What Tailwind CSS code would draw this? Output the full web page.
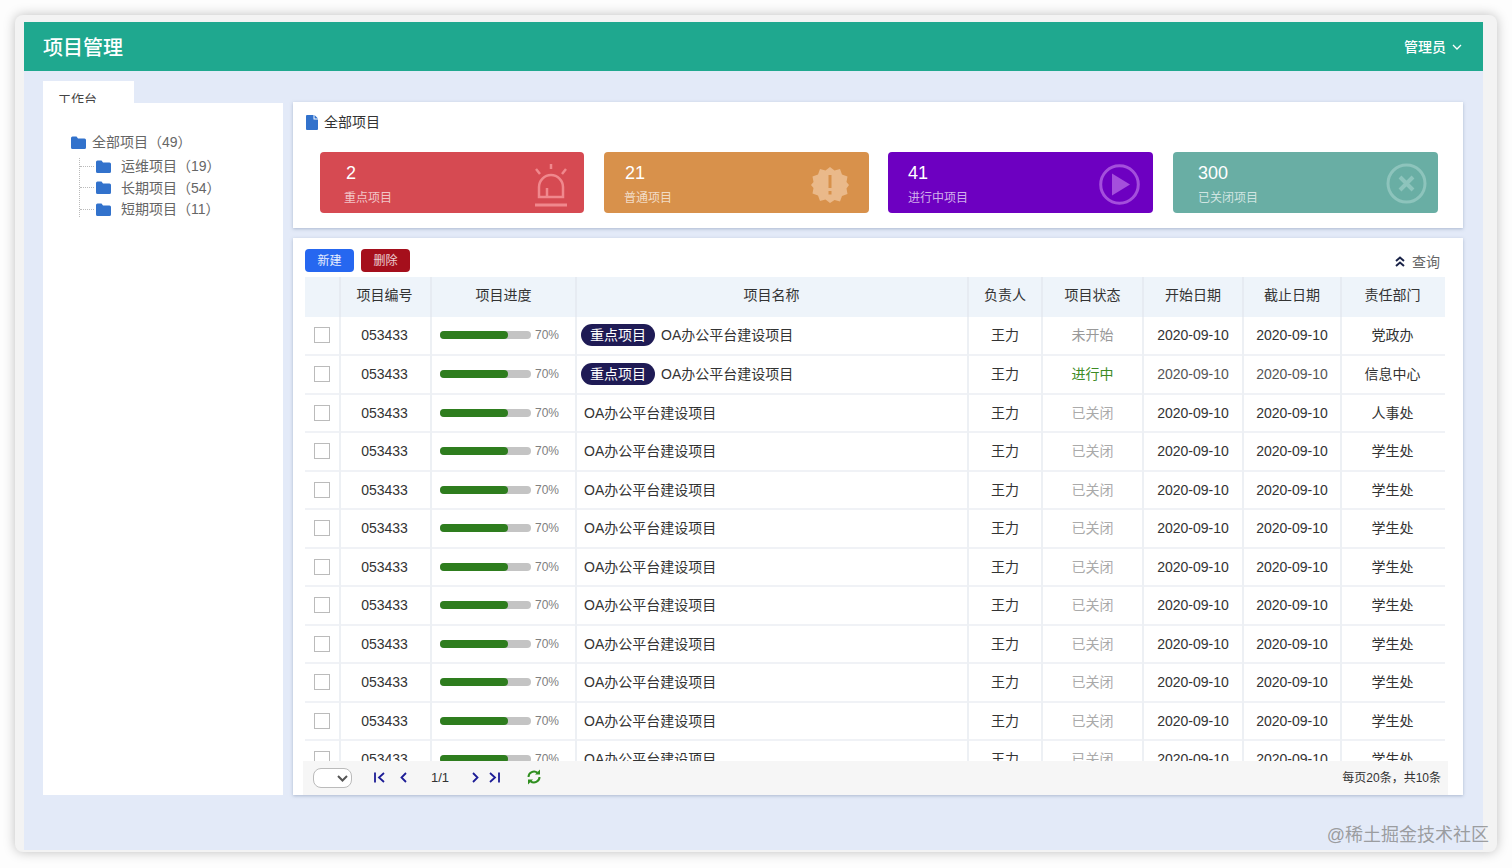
<!DOCTYPE html>
<html lang="zh-CN">
<head>
    <meta charset="UTF-8">
    <title>项目管理</title>
    <script src="https://cdn.jsdelivr.net/npm/@tailwindcss/browser@4"></script>
</head>
<body class="w-[1512px] h-[868px] overflow-hidden bg-[#fdfdfd] text-[#333] font-['Liberation_Sans','Noto_Sans_CJK_SC',sans-serif]">
    <div class="relative ml-[15px] mt-[15px] w-[1482px] h-[837px] pl-[9px] pt-[7px] pr-[14px] pb-[2px] bg-[#f3f3f3] rounded-lg shadow-[0_0_12px_rgba(0,0,0,0.25)]">
        <div class="w-[1459px] h-full flex flex-col bg-[#e3eaf8]">
            <!-- header -->
            <header class="h-[49px] flex items-center justify-between pl-[19px] pr-[21px] bg-[#1fa88f] text-white">
                <h1 class="pt-[3px] text-xl font-medium">项目管理</h1>
                <div class="flex items-center gap-[6px] text-sm font-medium">
                    管理员
                    <svg width="10" height="6" viewBox="0 0 10 6" fill="none" stroke="currentColor" stroke-width="1.3"><path d="M1 1l4 4 4-4"/></svg>
                </div>
            </header>

            <main class="flex flex-1 pl-[19px] pr-[20px]">
                <!-- tree -->
                <aside class="w-[240px] mr-[10px] pt-[10px] flex flex-col">
                    <div class="w-[91px] h-[22px] pl-[15px] pt-[10px] bg-white overflow-hidden text-[13px] leading-[18px] text-[#444]">工作台</div>
                    <div class="h-[692px] bg-white pl-[28px] pt-[29px] text-sm text-[#666]">
                        <div class="flex items-center h-[20px] gap-[6px]">
                            <svg width="15" height="13" viewBox="0 0 15 13" fill="#3272cc"><path d="M0 2a1.500 1.500 0 011.500-1.500h4L7 2.500h6.500A1.500 1.500 0 0115 4v7.500a1.500 1.500 0 01-1.500 1.500h-12A1.500 1.500 0 010 11.500z"/></svg>
                            全部项目（49）
                        </div>
                        <div class="relative ml-[8px] mt-[6px] pl-[16px] flex flex-col gap-[5.5px] border-l border-dotted border-[#bbb]">
                            <div class="flex items-center h-[16px] gap-[10px]">
                                <span class="absolute left-0 w-[14px] border-t border-dotted border-[#bbb]"></span>
                                <svg width="15" height="13" viewBox="0 0 15 13" fill="#3272cc"><path d="M0 2a1.500 1.500 0 011.500-1.500h4L7 2.500h6.500A1.500 1.500 0 0115 4v7.500a1.500 1.500 0 01-1.500 1.500h-12A1.500 1.500 0 010 11.500z"/></svg>
                                运维项目（19）
                            </div>
                            <div class="flex items-center h-[16px] gap-[10px]">
                                <span class="absolute left-0 w-[14px] border-t border-dotted border-[#bbb]"></span>
                                <svg width="15" height="13" viewBox="0 0 15 13" fill="#3272cc"><path d="M0 2a1.500 1.500 0 011.500-1.500h4L7 2.500h6.500A1.500 1.500 0 0115 4v7.500a1.500 1.500 0 01-1.500 1.500h-12A1.500 1.500 0 010 11.500z"/></svg>
                                长期项目（54）
                            </div>
                            <div class="flex items-center h-[16px] gap-[10px]">
                                <span class="absolute left-0 w-[14px] border-t border-dotted border-[#bbb]"></span>
                                <svg width="15" height="13" viewBox="0 0 15 13" fill="#3272cc"><path d="M0 2a1.500 1.500 0 011.500-1.500h4L7 2.500h6.500A1.500 1.500 0 0115 4v7.500a1.500 1.500 0 01-1.500 1.500h-12A1.500 1.500 0 010 11.500z"/></svg>
                                短期项目（11）
                            </div>
                        </div>
                    </div>
                </aside>

                <div class="w-[1170px] pt-[31px] flex flex-col gap-[10px]">
                    <!-- summary -->
                    <section class="h-[126px] bg-white shadow-[0_1px_3px_rgba(120,140,170,0.5)] pl-[13px] pt-[11px]">
                        <div class="flex items-center gap-[6px] h-[18px] text-sm">
                            <svg width="12" height="15" viewBox="0 0 12 15" fill="#3272cc"><path d="M1 0h6.500v4.500H12V14a1 1 0 01-1 1H1a1 1 0 01-1-1V1a1 1 0 011-1zM8.500 0L12 3.500H8.500z"/></svg>
                            全部项目
                        </div>
                        <div class="mt-[21px] ml-[14px] flex gap-[20px] text-white">
                            <div class="w-[264px] h-[61px] rounded bg-[#d64a52] flex justify-between pl-[24px] pr-[15px]">
                                <div class="pt-[10px]">
                                    <div class="pl-[2px] text-lg leading-[22px]">2</div>
                                    <div class="mt-[6px] text-xs text-white/70">重点项目</div>
                                </div>
                                <svg class="mt-[12px]" width="36" height="43" viewBox="0 0 36 43" fill="none" stroke="#f0888d" stroke-width="2.500"><path d="M6 33V23a12 12 0 0124 0v10zM14 33V24"/><path stroke-width="3" d="M2 41h32"/><path d="M18 0v5M3 5l4 5M33 5l-4 5"/></svg>
                            </div>
                            <div class="w-[265px] h-[61px] rounded bg-[#d8914b] flex justify-between pl-[20px] pr-[20px]">
                                <div class="pt-[10px]">
                                    <div class="pl-[1px] text-lg leading-[22px]">21</div>
                                    <div class="mt-[6px] text-xs text-white/70">普通项目</div>
                                </div>
                                <svg class="mt-[14px]" width="38" height="38" viewBox="0 0 38 38"><path fill="#eab98a" d="M19 1l4.500 3.500L29 3l2 5.500 5.500 2-1 5.500 2.500 3-2.500 3.500 1 5.500-5.500 2-2 5.500-5.500-1.500L19 37l-4.500-3.500L9 35l-2-5.500-5.500-2 1-5.500L0 19l2.500-3-1-5.500 5.500-2L9 3l5.500 1.500z"/><path fill="#d8914b" d="M17.500 9h3v13h-3zM17.500 25h3v3.500h-3z"/></svg>
                            </div>
                            <div class="w-[265px] h-[61px] -ml-[1px] rounded bg-[#6d00c1] flex justify-between pl-[20px] pr-[13px]">
                                <div class="pt-[10px]">
                                    <div class="text-lg leading-[22px]">41</div>
                                    <div class="mt-[6px] text-xs text-white/70">进行中项目</div>
                                </div>
                                <svg class="mt-[12px]" width="41" height="41" viewBox="0 0 41 41"><circle cx="20.500" cy="20.500" r="18.800" fill="none" stroke="#a44fdc" stroke-width="3"/><path fill="#a44fdc" d="M13 9.500l18 11-18 11z"/></svg>
                            </div>
                            <div class="w-[265px] h-[61px] rounded bg-[#69aea4] flex justify-between pl-[25px] pr-[11px]">
                                <div class="pt-[10px]">
                                    <div class="text-lg leading-[22px]">300</div>
                                    <div class="mt-[6px] text-xs text-white/70">已关闭项目</div>
                                </div>
                                <svg class="mt-[11px]" width="41" height="41" viewBox="0 0 41 41" fill="none" stroke="#8dc4bc"><circle cx="20.500" cy="20.500" r="18.500" stroke-width="3"/><path stroke-width="4" d="M14 14l13 13M27 14L14 27"/></svg>
                            </div>
                        </div>
                    </section>

                    <!-- table card -->
                    <section class="h-[557px] bg-white shadow-[0_1px_3px_rgba(120,140,170,0.5)] flex flex-col">
                        <div class="h-[39px] pl-[12px] pr-[23px] pt-[11px] flex justify-between">
                            <div class="flex gap-[7px]">
                                <button class="w-[49px] h-[23px] pt-[1px] rounded-sm bg-[#2667f0] text-xs text-white/90">新建</button>
                                <button class="w-[49px] h-[23px] pt-[1px] rounded-sm bg-[#a50f1c] text-xs text-white/80">删除</button>
                            </div>
                            <div class="flex items-center gap-[7px] h-[23px] mt-[1px] text-sm text-[#666]">
                                <svg width="10" height="11" viewBox="0 0 10 11" fill="none" stroke="#1a2348" stroke-width="2"><path d="M1 5l4-3.500L9 5M1 10l4-3.500L9 10"/></svg>
                                查询
                            </div>
                        </div>
                        <div class="ml-[12px] w-[1140px] h-[484px] overflow-hidden">
                            <table class="w-full table-fixed border-collapse text-sm text-center">
                                <colgroup>
                                    <col class="w-[35px]"><col class="w-[91px]"><col class="w-[145px]"><col class="w-[392px]"><col class="w-[74px]"><col class="w-[101px]"><col class="w-[100px]"><col class="w-[98px]"><col class="w-[104px]">
                                </colgroup>
                                <thead>
                                    <tr class="h-[39.6px] bg-[#eef4fa] font-medium">
                                        <th class="pb-[3px] font-normal border-r-2 border-[#e6ebf2]"></th>
                                        <th class="pb-[3px] pr-[2px] font-normal border-r-2 border-[#e6ebf2]">项目编号</th>
                                        <th class="pb-[3px] font-normal border-r-2 border-[#e6ebf2]">项目进度</th>
                                        <th class="pb-[3px] pr-[1px] font-normal border-r-2 border-[#e6ebf2]">项目名称</th>
                                        <th class="pb-[3px] font-normal border-r-2 border-[#e6ebf2]">负责人</th>
                                        <th class="pb-[3px] font-normal border-r-2 border-[#e6ebf2]">项目状态</th>
                                        <th class="pb-[3px] font-normal border-r-2 border-[#e6ebf2]">开始日期</th>
                                        <th class="pb-[3px] font-normal border-r-2 border-[#e6ebf2]">截止日期</th>
                                        <th class="pb-[3px] pr-[2px] font-normal">责任部门</th>
                                    </tr>
                                </thead>
                                <tbody id="rows"></tbody>
                            </table>
                        </div>
                        <!-- pager -->
                        <div class="ml-[10px] w-[1145px] h-[34px] px-[10px] pb-[2px] bg-[#f6f6f6] flex items-center text-xs text-[#333]">
                            <div class="w-[39px] h-[20px] mt-[2px] mr-[22px] pr-[3px] bg-white rounded-lg border border-[#bbb] flex items-center justify-end">
                                <svg width="11" height="7" viewBox="0 0 11 7" fill="none" stroke="#555" stroke-width="2"><path d="M1 1l4.500 4.500L10 1"/></svg>
                            </div>
                            <svg class="mr-[15px]" width="11" height="11" viewBox="0 0 11 11" fill="none" stroke="#1c1c96" stroke-width="1.800"><path d="M1 .5v10M10 1L5 5.500l5 4.500"/></svg>
                            <svg class="mr-[24px]" width="7" height="11" viewBox="0 0 7 11" fill="none" stroke="#1c1c96" stroke-width="1.800"><path d="M6 1L1.500 5.500 6 10"/></svg>
                            <span class="w-[41px] mt-[1px] text-[13px]">1/1</span>
                            <svg class="mr-[10px]" width="7" height="11" viewBox="0 0 7 11" fill="none" stroke="#1c1c96" stroke-width="1.800"><path d="M1 1l4.500 4.500L1 10"/></svg>
                            <svg class="mr-[27px]" width="11" height="11" viewBox="0 0 11 11" fill="none" stroke="#1c1c96" stroke-width="1.800"><path d="M10 .5v10M1 1l5 4.500L1 10"/></svg>
                            <svg width="14" height="16" viewBox="0 0 14 16" fill="none" stroke="#2f8f1f" stroke-width="2"><path d="M1.500 8a5.500 5.500 0 019-4.200M12.500 8a5.500 5.500 0 01-9 4.200"/><path fill="#2f8f1f" stroke="none" d="M8 5.500h5V.5zM6 10.500H1v5z"/></svg>
                            <span class="ml-auto mr-[-3px] mt-[1px]">每页20条，共10条</span>
                        </div>
                    </section>
                </div>
            </main>
        </div>
        <div class="absolute right-[8px] bottom-[5px] text-lg leading-[24px] text-[#888]/80">@稀土掘金技术社区</div>
    </div>

    <script>
        const depts = ['党政办', '信息中心', '人事处', '学生处', '学生处', '学生处', '学生处', '学生处', '学生处', '学生处', '学生处', '学生处'];
        const rows = document.getElementById('rows');

        depts.forEach((dept, i) => {
            const badge = i < 2
                ? '<span class="inline-block w-[74px] h-[22px] mr-[6px] rounded-full bg-[#1f1b55] text-white text-center leading-[22px]">重点项目</span>'
                : '';
            const status = i === 0 ? '<td class="border-r-2 border-[#edf0f4] text-[#999]">未开始</td>'
                : i === 1 ? '<td class="border-r-2 border-[#edf0f4] text-[#3c8a24]">进行中</td>'
                : '<td class="border-r-2 border-[#edf0f4] text-[#aaa]">已关闭</td>';
            const dateColor = i === 1 ? 'text-[#555]' : '';

            const tr = document.createElement('tr');
            tr.className = 'h-[38.5px] border-b-2 border-[#f0f2f6]';
            tr.innerHTML = `
                <td class="border-r-2 border-[#edf0f4]"><span class="block w-[16px] h-[16px] ml-[9px] bg-white border border-[#bbb]"></span></td>
                <td class="pr-[2px] border-r-2 border-[#edf0f4]">053433</td>
                <td class="border-r-2 border-[#edf0f4]">
                    <div class="flex items-center pl-[8px] gap-[4px]">
                        <div class="w-[91px] h-[8px] rounded-full bg-[#c4c4c4]"><div class="w-[68px] h-full rounded-full bg-[#2e7d1e]"></div></div>
                        <span class="text-xs text-[#808080]">70%</span>
                    </div>
                </td>
                <td class="border-r-2 border-[#edf0f4] text-left ${badge ? 'pl-[4px]' : 'pl-[7px]'}">${badge}OA办公平台建设项目</td>
                <td class="border-r-2 border-[#edf0f4]">王力</td>
                ${status}
                <td class="border-r-2 border-[#edf0f4] ${dateColor}">2020-09-10</td>
                <td class="border-r-2 border-[#edf0f4] ${dateColor}">2020-09-10</td>
                <td class="pr-[2px]">${dept}</td>`;
            rows.appendChild(tr);
        });
    </script>
</body>
</html>
